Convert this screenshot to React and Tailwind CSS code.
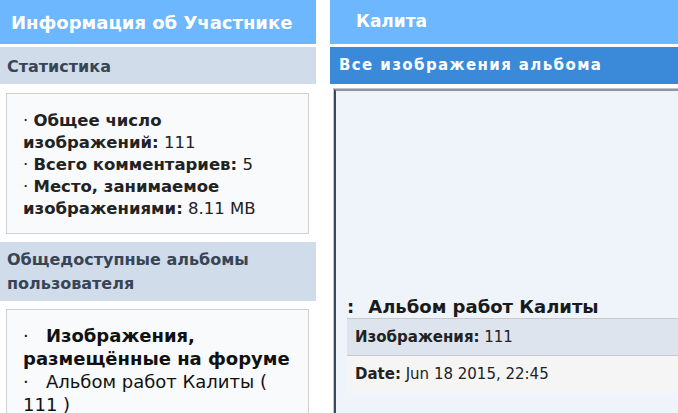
export default function App() {
  const font = { fontFamily: '"DejaVu Sans", Verdana, sans-serif' };
  return (
    <div className="w-[678px] h-[413px] overflow-hidden bg-white flex gap-[14px]" style={font}>
      <div className="w-[316px] shrink-0 flex flex-col">
        <div className="shrink-0 h-[44px] bg-[#6cb7fe] flex items-center pl-[11px] text-white font-bold text-[18px]">
          Информация об Участнике
        </div>
        <div className="shrink-0 mt-[3px] h-[37px] bg-[#d0dce9] flex items-center pl-[7px] pt-[2px] text-[#374556] font-bold text-[16px]">
          Статистика
        </div>
        <div className="shrink-0 mt-[9px] ml-[6px] mr-[7px] h-[141px] border border-[#d0d0d0] bg-[#f8fafc] px-[16px] pt-[16px] text-[16.5px] leading-[22px] text-[#222]">
          <div>· <b>Общее число изображений:</b> 111</div>
          <div>· <b>Всего комментариев:</b> 5</div>
          <div>· <b>Место, занимаемое изображениями:</b> 8.11 MB</div>
        </div>
        <div className="shrink-0 mt-[8px] h-[59px] bg-[#d0dce9] flex items-center pl-[7px] text-[#374556] font-bold text-[16px] leading-[24px]">
          Общедоступные альбомы<br />пользователя
        </div>
        <div className="shrink-0 mt-[8px] ml-[6px] mr-[7px] h-[120px] border border-[#d0d0d0] bg-[#f8fafc] px-[16px] pt-[14px] text-[18px] leading-[23px] text-[#111]">
          <div>·&nbsp;&nbsp; <b>Изображения, размещённые на форуме</b></div>
          <div>·&nbsp;&nbsp; Альбом работ Калиты ( 111 )</div>
        </div>
      </div>
      <div className="flex-1 flex flex-col">
        <div className="shrink-0 h-[44px] bg-[#6cb7fe] flex items-center pl-[26px] text-white font-bold text-[17px]">
          Калита
        </div>
        <div className="shrink-0 mt-[3px] h-[37px] bg-[#3a8ad9] flex items-center pl-[9px] text-white font-bold text-[15px] tracking-[1.4px]">
          Все изображения альбома
        </div>
        <div className="shrink-0 mt-[4px] ml-[3px] h-[330px] border-l border-t border-[#c4c4c4]">
          <div className="h-full border-l-[2px] border-t-[2px] border-l-[#3b4a5e] border-t-[#8a96a6] bg-[#eef4fa] pl-[11px] pt-[204px]">
            <div className="h-[23px] flex items-center font-bold text-[18px] text-[#1a1a1a]">
              <span className="mr-[14px]">:</span>Альбом работ Калиты
            </div>
            <div className="h-[38px] bg-[#dde4ee] border-t border-[#c8c8c8] border-b flex items-center pl-[8px] text-[15px] text-[#222]">
              <b>Изображения:</b>&nbsp;111
            </div>
            <div className="h-[37px] bg-[#f5f5f5] flex items-center pl-[8px] text-[15px] text-[#222]">
              <b>Date:</b>&nbsp;Jun 18 2015, 22:45
            </div>
          </div>
        </div>
      </div>
    </div>
  );
}
